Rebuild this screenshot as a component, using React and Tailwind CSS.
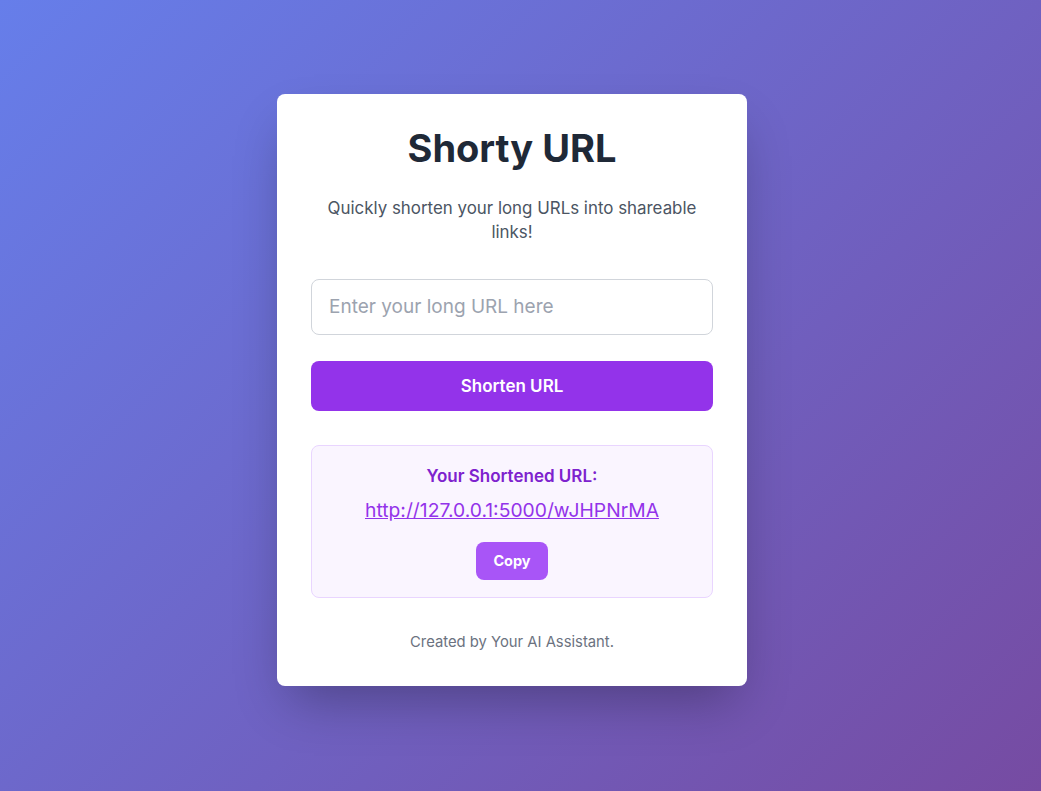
import React, { useState } from 'react';

const App = () => {
  const [url, setUrl] = useState('');
  const shortUrl = 'http://127.0.0.1:5000/wJHPNrMA';

  return (
    <div
      className="min-h-screen w-full bg-[linear-gradient(135deg,#667eea_0%,#764ba2_100%)] flex justify-center pt-[94px] pr-[17px]"
      style={{ fontFamily: 'Inter, "Noto Sans", sans-serif' }}
    >
      <div className="w-[470px] h-[592px] bg-white rounded-[8px] shadow-[0_25px_50px_-12px_rgba(0,0,0,0.3)] px-[34px] pt-[33px] text-center">
        <h1 className="text-[38px] leading-[42px] font-bold text-[#1f2937]">Shorty URL</h1>
        <p className="mt-[27px] text-[16.9px] leading-6 text-[#4b5563] px-[10px]">
          Quickly shorten your long URLs into shareable links!
        </p>

        <input
          type="text"
          value={url}
          onChange={(e) => setUrl(e.target.value)}
          placeholder="Enter your long URL here"
          className="mt-[35px] w-full h-[56px] px-[17px] pb-[2px] border border-[#d1d5db] rounded-lg text-[19px] text-[#1f2937] placeholder-[#9ca3af] outline-none"
        />

        <button className="mt-[26px] w-full h-[50px] pt-[2px] bg-[#9333ea] text-white font-semibold text-[17px] rounded-lg">
          Shorten URL
        </button>

        <div className="mt-[34px] bg-[#faf5ff] border border-[#e9d5ff] rounded-lg pt-[18px] pb-[17px]">
          <h3 className="text-[17px] leading-6 font-semibold text-[#7e22ce]">Your Shortened URL:</h3>
          <a
            href="#"
            className="block mt-[8px] text-[19.3px] leading-7 text-[#9333ea] underline"
          >
            {shortUrl}
          </a>
          <button className="mt-[18px] h-[38px] w-[72px] bg-[#a855f7] text-white text-[14.5px] font-bold rounded-lg">
            Copy
          </button>
        </div>

        <p className="mt-[34px] text-[14.8px] leading-5 text-[#6b7280]">Created by Your AI Assistant.</p>
      </div>
    </div>
  );
};

export default App;
